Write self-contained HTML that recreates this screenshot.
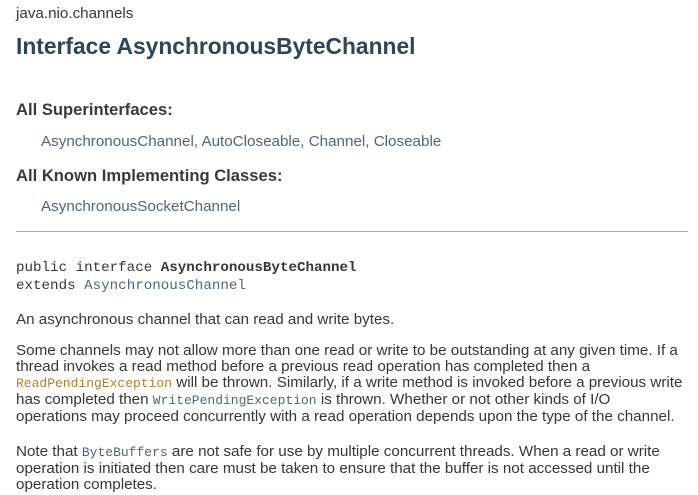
<!DOCTYPE html>
<html><head><meta charset="utf-8"><style>
body{margin:0;background:#fff;width:698px;height:495px;overflow:hidden;font-family:"Liberation Sans",Arial,sans-serif;color:#353833;position:relative}
div{position:absolute;white-space:nowrap;left:16px}
.m{font-family:"Liberation Mono",monospace;font-size:14.2px}
a{color:#4a6782;text-decoration:none}
.o{color:#bb7a2a;font-family:"Liberation Mono",monospace;font-size:13px}
.g{color:#4a6782;font-family:"Liberation Mono",monospace;font-size:13px}
.p{font-size:15.2px;line-height:16px}
</style></head><body>
<div style="top:5px;font-size:15.2px">java.nio.channels</div>
<div style="top:33px;font-size:22.8px;font-weight:bold;color:#2c4557">Interface AsynchronousByteChannel</div>
<div style="top:100px;font-size:16.6px;font-weight:bold;color:#3a3a3a">All Superinterfaces:</div>
<div style="top:133px;left:41px;font-size:15.2px;color:#4a6782"><a>AsynchronousChannel</a>, <a>AutoCloseable</a>, <a>Channel</a>, <a>Closeable</a></div>
<div style="top:166px;font-size:16.6px;font-weight:bold;color:#3a3a3a">All Known Implementing Classes:</div>
<div style="top:198px;left:41px;font-size:15.2px"><a>AsynchronousSocketChannel</a></div>
<div style="top:231px;width:672px;height:1px;background:#9eadc0"></div>
<div class="m" style="top:259px;line-height:18px">public interface <b>AsynchronousByteChannel</b><br>extends <a>AsynchronousChannel</a></div>
<div class="p" style="top:312px">An asynchronous channel that can read and write bytes.</div>
<div class="p" style="top:343px">Some channels may not allow more than one read or write to be outstanding at any given time. If a<br>thread invokes a read method before a previous read operation has completed then a<br><span class="o">ReadPendingException</span> will be thrown. Similarly, if a write method is invoked before a previous write<br>has completed then <span class="g">WritePendingException</span> is thrown. Whether or not other kinds of I/O<br>operations may proceed concurrently with a read operation depends upon the type of the channel.</div>
<div class="p" style="top:444px">Note that <span class="g">ByteBuffers</span> are not safe for use by multiple concurrent threads. When a read or write<br>operation is initiated then care must be taken to ensure that the buffer is not accessed until the<br>operation completes.</div>
</body></html>
